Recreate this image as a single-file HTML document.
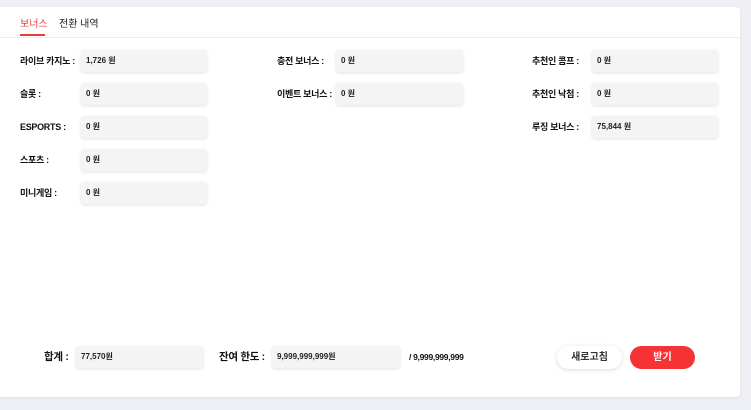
<!DOCTYPE html><html><head><meta charset="utf-8"><style>
body{margin:0;width:751px;height:410px;background:#eef0f6;font-family:"Liberation Sans","Noto Sans CJK KR",sans-serif;position:relative;overflow:hidden}
.card{position:absolute;left:0;top:7px;width:740px;height:390px;background:#fff;border-radius:0 4px 4px 0;box-shadow:0 1px 3px rgba(0,0,0,.08)}
.tab{position:absolute;top:8px;font-size:10px;color:#222}
.ul{position:absolute;left:20px;top:27px;width:25px;height:2px;background:#f03a3a}
.div{position:absolute;left:0;top:30px;width:740px;height:1px;background:#eee}
.l{position:absolute;font-size:9px;font-weight:bold;color:#111;line-height:22px;letter-spacing:-0.3px}
.i{position:absolute;height:22px;width:126px;background:#f4f4f4;border-radius:3px;box-shadow:0 1px 3px rgba(0,0,0,.12);font-size:8px;font-weight:bold;color:#222;line-height:22px;padding-left:5px;box-sizing:border-box}
.b{position:absolute;top:339px;height:23px;width:65px;border-radius:12px;font-size:10px;font-weight:bold;text-align:center;line-height:23px}
</style></head><body><div class="card">
<div class="tab" style="left:20px;color:#f03a3a">보너스</div>
<div class="tab" style="left:59px">전환 내역</div>
<div class="ul"></div><div class="div"></div>
<div class="l" style="left:20px;top:43px">라이브 카지노 :</div><div class="i" style="left:81px;top:43px">1,726 원</div>
<div class="l" style="left:20px;top:76px">슬롯 :</div><div class="i" style="left:81px;top:76px">0 원</div>
<div class="l" style="left:20px;top:109px">ESPORTS :</div><div class="i" style="left:81px;top:109px">0 원</div>
<div class="l" style="left:20px;top:142px">스포츠 :</div><div class="i" style="left:81px;top:142px">0 원</div>
<div class="l" style="left:20px;top:175px">미니게임 :</div><div class="i" style="left:81px;top:175px">0 원</div>
<div class="l" style="left:277px;top:43px">충전 보너스 :</div><div class="i" style="left:336px;top:43px;width:127px">0 원</div>
<div class="l" style="left:277px;top:76px">이벤트 보너스 :</div><div class="i" style="left:336px;top:76px;width:127px">0 원</div>
<div class="l" style="left:532px;top:43px">추천인 콤프 :</div><div class="i" style="left:592px;top:43px">0 원</div>
<div class="l" style="left:532px;top:76px">추천인 낙첨 :</div><div class="i" style="left:592px;top:76px">0 원</div>
<div class="l" style="left:532px;top:109px">루징 보너스 :</div><div class="i" style="left:592px;top:109px">75,844 원</div>
<div class="l" style="left:44px;top:339px;font-size:10.5px">합계 :</div><div class="i" style="left:76px;top:339px;width:127px">77,570원</div>
<div class="l" style="left:219px;top:339px;font-size:10.5px">잔여 한도 :</div><div class="i" style="left:272px;top:339px;width:128px">9,999,999,999원</div>
<div class="l" style="left:409px;top:339px;font-size:8.5px">/ 9,999,999,999</div>
<div class="b" style="left:557px;background:#fff;color:#333;box-shadow:0 1px 5px rgba(0,0,0,.15)">새로고침</div>
<div class="b" style="left:630px;background:#f53234;color:#fff">받기</div>
</div></body></html>
